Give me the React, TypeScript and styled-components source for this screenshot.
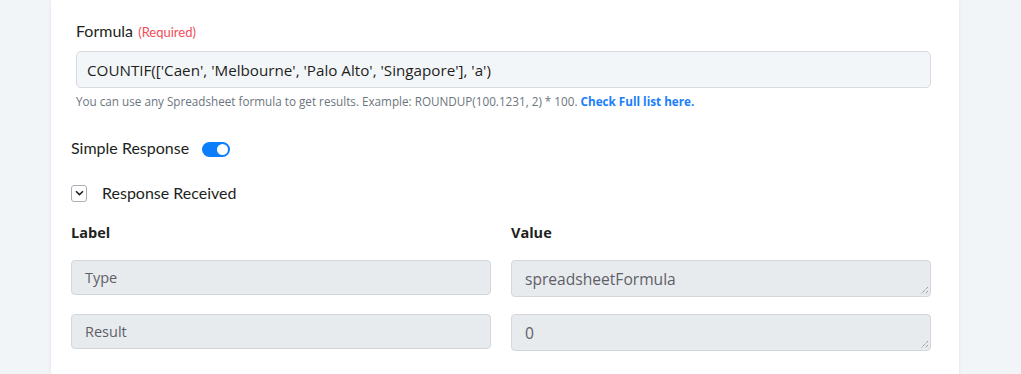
import React from "react";
import styled, { createGlobalStyle } from "styled-components";

const Global = createGlobalStyle`
  html, body { margin: 0; padding: 0; background: #f2f5f8; }
  body { font-family: "Lato", "Open Sans", sans-serif; color: #1e1f21; }
  * { box-sizing: border-box; }
`;

const Page = styled.div`
  height: 374px;
  overflow: hidden;
  padding-left: 51px;
`;

const Card = styled.div`
  width: 908px;
  min-height: 400px;
  background: #ffffff;
  box-shadow: 0 0 4px rgba(30, 40, 60, 0.08);
  padding: 21px 28px 0 20px;
`;

const FormulaGroup = styled.div`
  padding-left: 5px;
`;

const FieldLabel = styled.label`
  display: block;
  font-family: "Lato", sans-serif;
  font-size: 16px;
  line-height: 20px;
  color: #1e1f21;
  margin-bottom: 9px;
`;

const Req = styled.span`
  font-size: 13px;
  color: #f04d5b;
  margin-left: 1px;
`;

const FormulaInput = styled.div`
  height: 37px;
  background: #f3f6f9;
  border: 1px solid #d6dae0;
  border-radius: 5px;
  padding: 0 10px;
  display: flex;
  align-items: center;
  font-family: "Open Sans", sans-serif;
  font-size: 15.2px;
  color: #1e1f21;
`;

const Help = styled.p`
  margin: 5px 0 0;
  font-family: "Open Sans", sans-serif;
  font-size: 11.7px;
  line-height: 16px;
  color: #6c757d;
`;

const Link = styled.a`
  color: #1a7efb;
  font-weight: 700;
  text-decoration: none;
`;

const SwitchRow = styled.div`
  display: flex;
  align-items: center;
  gap: 13px;
  margin-top: 29px;
  font-size: 16px;
  line-height: 20px;
`;

const Toggle = styled.span<{ on?: boolean }>`
  position: relative;
  width: 28px;
  height: 15px;
  border-radius: 8px;
  margin-top: 2px;
  background: ${(p) => (p.on ? "#0d7efb" : "#cbd0d6")};
  &::after {
    content: "";
    position: absolute;
    top: 2px;
    left: ${(p) => (p.on ? "15px" : "2px")};
    width: 11px;
    height: 11px;
    border-radius: 50%;
    background: #fff;
  }
`;

const CollapseRow = styled.div`
  display: flex;
  align-items: center;
  gap: 15px;
  margin-top: 25px;
  font-size: 16px;
  line-height: 20px;
`;

const ChevronBox = styled.span`
  width: 16px;
  height: 17px;
  border: 1px solid #a9b0b8;
  border-radius: 3px;
  display: flex;
  align-items: center;
  justify-content: center;
`;

const Grid = styled.div`
  display: grid;
  grid-template-columns: 1fr 1fr;
  column-gap: 20px;
  margin-top: 20px;
`;

const ColHead = styled.div`
  font-family: "Open Sans", sans-serif;
  font-weight: 700;
  font-size: 14.5px;
  line-height: 20px;
  color: #1e1f21;
  margin-bottom: 17px;
`;

const Cell = styled.div<{ tall?: boolean }>`
  position: relative;
  height: ${(p) => (p.tall ? "37px" : "35px")};
  background: #e8ebee;
  border: 1px solid #d3d7dc;
  border-radius: 4px;
  padding: 0 13px;
  display: flex;
  align-items: center;
  font-family: "Open Sans", sans-serif;
  font-size: ${(p) => (p.tall ? "15.6px" : "14.5px")};
  color: #5d6167;
  margin-bottom: ${(p) => (p.tall ? "17px" : "19px")};
`;

const Grip = styled.svg`
  position: absolute;
  right: 1px;
  bottom: 1px;
`;

const ResizeGrip = () => (
  <Grip width="9" height="9" viewBox="0 0 9 9">
    <line x1="8" y1="1" x2="1" y2="8" stroke="#777" strokeWidth="1" strokeDasharray="1 1" />
    <line x1="8" y1="5" x2="5" y2="8" stroke="#777" strokeWidth="1" strokeDasharray="1 1" />
  </Grip>
);

export default function App() {
  return (
    <>
      <Global />
      <Page>
        <Card>
          <FormulaGroup>
            <FieldLabel>
              Formula <Req>(Required)</Req>
            </FieldLabel>
            <FormulaInput>COUNTIF(['Caen', 'Melbourne', 'Palo Alto', 'Singapore'], 'a')</FormulaInput>
            <Help>
              You can use any Spreadsheet formula to get results. Example: ROUNDUP(100.1231, 2) * 100.{" "}
              <Link href="#">Check Full list here.</Link>
            </Help>
          </FormulaGroup>
          <SwitchRow>
            Simple Response
            <Toggle on />
          </SwitchRow>
          <CollapseRow>
            <ChevronBox>
              <svg width="9" height="6" viewBox="0 0 9 6">
                <path d="M1 1.2 L4.5 4.6 L8 1.2" fill="none" stroke="#1e1f21" strokeWidth="1.5" />
              </svg>
            </ChevronBox>
            Response Received
          </CollapseRow>
          <Grid>
            <div>
              <ColHead>Label</ColHead>
              <Cell>Type</Cell>
              <Cell>Result</Cell>
            </div>
            <div>
              <ColHead>Value</ColHead>
              <Cell tall>
                spreadsheetFormula
                <ResizeGrip />
              </Cell>
              <Cell tall>
                0
                <ResizeGrip />
              </Cell>
            </div>
          </Grid>
        </Card>
      </Page>
    </>
  );
}
